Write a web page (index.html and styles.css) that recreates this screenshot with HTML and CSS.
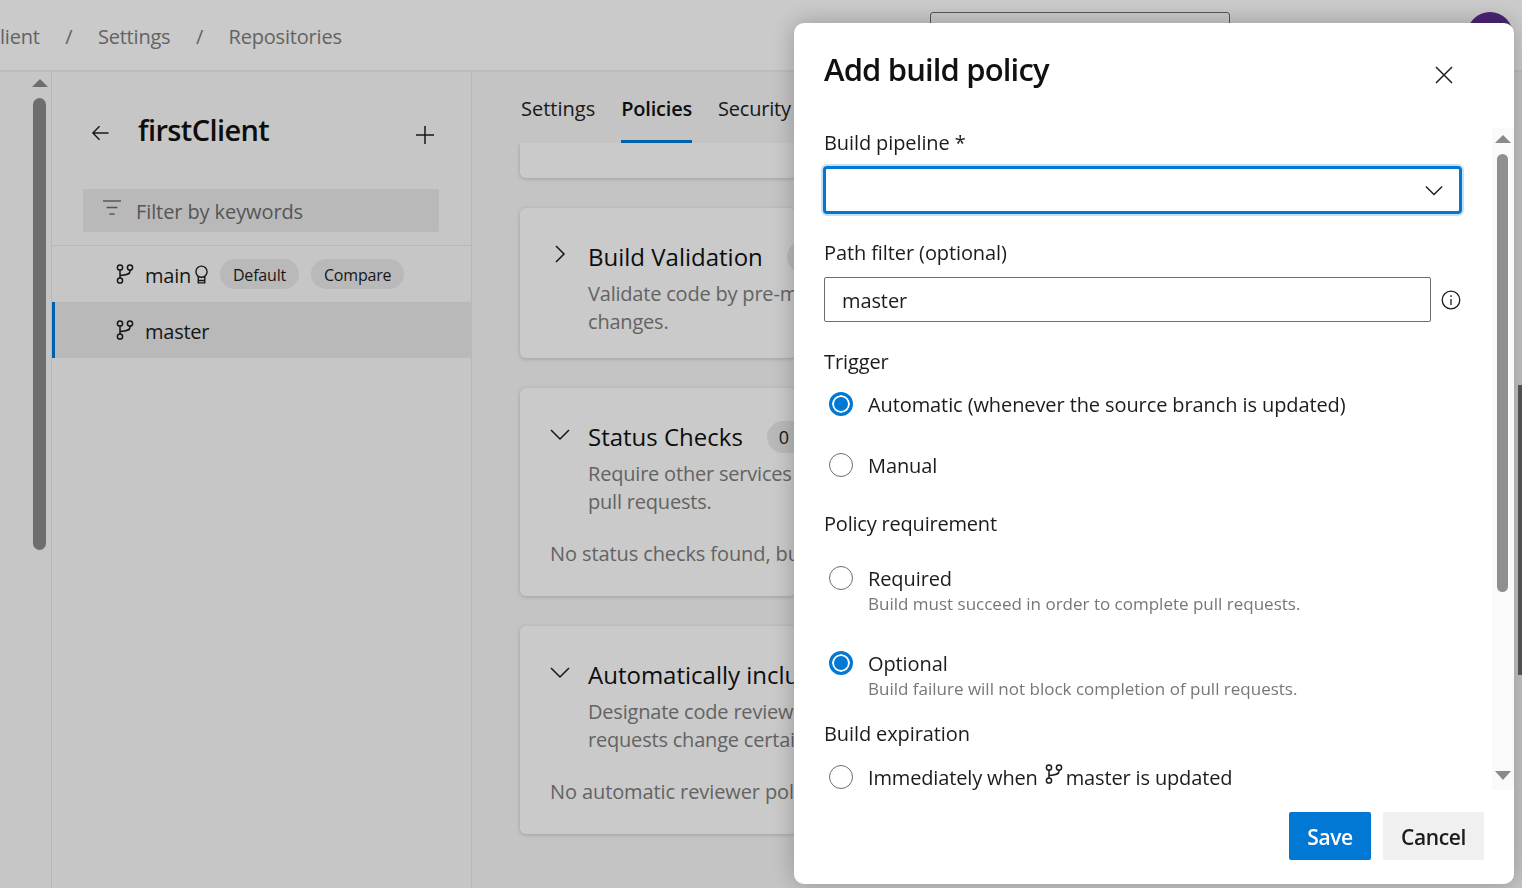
FILE: index.html
```html
<!DOCTYPE html>
<html lang="en">
<head>
    <meta charset="UTF-8">
    <title>Add build policy</title>
    <link rel="stylesheet" href="styles.css">
</head>
<body>

    <svg class="defs" width="0" height="0">
        <symbol id="branch" viewBox="0 0 18 20">
            <circle cx="4" cy="3.5" r="2.6"/>
            <circle cx="14" cy="3.5" r="2.6"/>
            <circle cx="4" cy="16.5" r="2.6"/>
            <path d="M4 6.1V13.9M14 6.1V7.5C14 10 11 10.8 4 11.5"/>
        </symbol>
    </svg>

    <div class="page">
        <header class="topbar">
            <nav class="crumbs">
                <span class="crumb-first">firstClient</span>
                <span class="crumb-sep">/</span>
                <span>Settings</span>
                <span class="crumb-sep">/</span>
                <span>Repositories</span>
            </nav>
            <div class="search"></div>
            <div class="avatar"></div>
        </header>

        <div class="content">
            <div class="rail">
                <i class="arrow-up rail-arrow"></i>
                <div class="rail-thumb"></div>
            </div>

            <aside class="sidebar">
                <div class="side-head">
                    <svg class="icon back" viewBox="0 0 20 20"><path d="M18.5 10H2M9 3l-7 7 7 7"/></svg>
                    <h2>firstClient</h2>
                    <svg class="icon plus" viewBox="0 0 18 18"><path d="M9 0V18M0 9H18"/></svg>
                </div>
                <div class="filter">
                    <svg class="icon filter-icon" viewBox="0 0 18 16"><path d="M0 1H18M3.5 7.5H14.5M6.5 14H11.5"/></svg>
                    <span>Filter by keywords</span>
                </div>
                <ul class="branches">
                    <li class="branch">
                        <svg class="icon branch-icon"><use href="#branch"/></svg>
                        <span>main</span>
                        <svg class="icon award" viewBox="0 0 14 20"><circle cx="7" cy="7" r="6"/><path d="M3.5 12V19H10.5V12M3.5 16.5H10.5"/></svg>
                        <span class="pill">Default</span>
                        <span class="pill">Compare</span>
                    </li>
                    <li class="branch selected">
                        <svg class="icon branch-icon"><use href="#branch"/></svg>
                        <span>master</span>
                    </li>
                </ul>
            </aside>

            <main class="main">
                <div class="tabs">
                    <a class="tab-first">Settings</a>
                    <a class="active">Policies</a>
                    <a class="tab-last">Security</a>
                </div>
                <div class="scroller">
                    <div class="cards">
                        <section class="card card-cut"></section>

                        <section class="card">
                            <div class="card-head">
                                <svg class="icon chev chev-right" viewBox="0 0 20 20"><path d="M6 2l8 8-8 8"/></svg>
                                <h3>Build Validation</h3>
                                <span class="count">0</span>
                            </div>
                            <p class="desc">Validate code by pre-merge<br>changes.</p>
                        </section>

                        <section class="card">
                            <div class="card-head">
                                <svg class="icon chev" viewBox="0 0 20 20"><path d="M1 6l9 9 9-9"/></svg>
                                <h3>Status Checks</h3>
                                <span class="count">0</span>
                            </div>
                            <p class="desc">Require other services<br>pull requests.</p>
                            <p class="note">No status checks found, but</p>
                        </section>

                        <section class="card">
                            <div class="card-head">
                                <svg class="icon chev" viewBox="0 0 20 20"><path d="M1 6l9 9 9-9"/></svg>
                                <h3>Automatically included</h3>
                            </div>
                            <p class="desc">Designate code reviewers<br>requests change certain</p>
                            <p class="note">No automatic reviewer policies</p>
                        </section>
                    </div>
                    <div class="page-thumb"></div>
                </div>
            </main>
        </div>
    </div>

    <div class="backdrop"></div>

    <div class="modal">
        <div class="modal-head">
            <h1>Add build policy</h1>
            <svg class="icon close" viewBox="0 0 18 18"><path d="M1 1L17 17M17 1L1 17"/></svg>
        </div>

        <div class="modal-body">
            <form class="form">
                <label class="label">Build pipeline *</label>
                <div class="dropdown">
                    <svg class="icon drop-chev" viewBox="0 0 20 12"><path d="M1 1.5l9 9 9-9"/></svg>
                </div>

                <label class="label label-path">Path filter (optional)</label>
                <div class="path-row">
                    <div class="textbox">master</div>
                    <svg class="icon info" viewBox="0 0 20 20">
                        <circle cx="10" cy="10" r="8.8"/>
                        <path d="M10 9V15M10 5.2V7"/>
                    </svg>
                </div>

                <div class="label label-trigger">Trigger</div>
                <div class="radio radio-a"><i class="dot on"></i><span>Automatic (whenever the source branch is updated)</span></div>
                <div class="radio radio-b"><i class="dot"></i><span>Manual</span></div>

                <div class="label label-policy">Policy requirement</div>
                <div class="radio radio-req"><i class="dot"></i><span>Required</span></div>
                <div class="hint">Build must succeed in order to complete pull requests.</div>
                <div class="radio radio-opt"><i class="dot on"></i><span>Optional</span></div>
                <div class="hint">Build failure will not block completion of pull requests.</div>

                <div class="label label-expire">Build expiration</div>
                <div class="radio radio-imm">
                    <i class="dot"></i>
                    <span>Immediately when</span>
                    <svg class="icon branch-inline"><use href="#branch"/></svg>
                    <span>master is updated</span>
                </div>
            </form>

            <div class="modal-scroll">
                <i class="arrow-up"></i>
                <div class="modal-thumb"></div>
                <i class="arrow-down"></i>
            </div>
        </div>

        <div class="modal-foot">
            <button class="btn btn-save" type="button">Save</button>
            <button class="btn" type="button">Cancel</button>
        </div>
    </div>

</body>
</html>
```

FILE: styles.css
```css
* {
    box-sizing: border-box;
}
html, body {
    margin: 0;
    height: 888px;
    overflow: hidden;
}
body {
    font-family: "Open Sans", "Noto Sans", Arial, sans-serif;
    font-size: 20px;
    letter-spacing: -0.1px;
    color: #1c1c1c;
    background: #f5f5f5;
}
h1, h2, h3, p, ul {
    margin: 0;
    padding: 0;
}
.defs {
    position: absolute;
}
.icon {
    display: block;
    flex: none;
    fill: none;
    stroke: #1c1c1c;
    stroke-width: 1.5;
}

.page {
    height: 888px;
    display: flex;
    flex-direction: column;
}

/* barra superior */
.topbar {
    height: 72px;
    flex: none;
    display: flex;
    background: #fdfdfd;
    border-bottom: 2px solid #ececec;
    overflow: hidden;
}
.crumbs {
    display: flex;
    align-items: center;
    height: 72px;
    width: 930px;
    letter-spacing: -0.2px;
    color: #7c7c7c;
}
.crumbs span {
    white-space: nowrap;
}
.crumb-first {
    margin-left: -48px;
}
.crumb-sep {
    margin: 0 25.5px;
}
.search {
    width: 300px;
    height: 44px;
    margin-top: 12px;
    border: 1px solid #6a6a6a;
    border-radius: 3px;
}
.avatar {
    width: 46px;
    height: 46px;
    margin: 12px 0 0 237px;
    border-radius: 50%;
    background: #5c2e91;
}

.content {
    flex: 1;
    min-height: 0;
    display: flex;
}

/* scroll izquierdo */
.rail {
    width: 52px;
    flex: none;
    padding: 7px 0 0 33px;
    background: #f8f8f8;
    border-right: 1px solid #e6e6e6;
}
.rail-arrow {
    margin-left: -1px;
}
.rail-thumb {
    width: 13px;
    height: 452px;
    margin-top: 11px;
    border-radius: 7px;
    background: #8a8a8a;
}
.arrow-up, .arrow-down {
    display: block;
    width: 0;
    height: 0;
    border-left: 8px solid transparent;
    border-right: 8px solid transparent;
}
.arrow-up {
    border-bottom: 8px solid #8a8a8a;
}
.arrow-down {
    border-top: 9px solid #8a8a8a;
}

/* panel de ramas */
.sidebar {
    width: 420px;
    flex: none;
    background: #f8f8f8;
    border-right: 1px solid #e6e6e6;
}
.side-head {
    height: 117px;
    display: flex;
    align-items: center;
    padding: 0 37px 0 39px;
}
.back {
    width: 19px;
    height: 20px;
    margin-top: 5px;
}
.side-head h2 {
    flex: 1;
    margin: -3px 0 0 28px;
    font-size: 29px;
    font-weight: 600;
    letter-spacing: -0.6px;
    color: #111;
}
.plus {
    width: 18px;
    height: 18px;
    margin-top: 9px;
}
.filter {
    height: 43px;
    margin: 0 32px 0 31px;
    padding-left: 20px;
    display: flex;
    align-items: center;
    gap: 15px;
    border-radius: 2px;
    background: #e8e8e8;
    color: #6c6c6c;
}
.filter span {
    padding-top: 2px;
}
.filter-icon {
    width: 18px;
    height: 16px;
    margin-top: -5px;
    stroke: #6c6c6c;
}
.branches {
    list-style: none;
    margin-top: 13px;
    border-top: 1px solid #e6e6e6;
}
.branch {
    height: 56px;
    display: flex;
    align-items: center;
    padding: 2px 0 0 64px;
    letter-spacing: -0.25px;
}
.branch.selected {
    background: #e8e8e8;
    border-left: 3px solid #0078d4;
    padding-left: 61px;
}
.branch-icon {
    width: 18px;
    height: 20px;
    margin: -2px 11px 0 0;
}
.award {
    width: 13px;
    height: 19px;
    margin: -2px 0 0 4px;
}
.pill {
    height: 30px;
    line-height: 32px;
    padding: 0 13px;
    margin: -2px 0 0 12px;
    border-radius: 15px;
    background: #e8e8e8;
    font-size: 16px;
    letter-spacing: -0.2px;
}

/* contenido principal */
.main {
    flex: 1;
    min-width: 0;
    display: flex;
    flex-direction: column;
}
.tabs {
    height: 71px;
    flex: none;
    display: flex;
    gap: 26px;
    padding-left: 49px;
}
.tabs a {
    height: 71px;
    padding-top: 23px;
    color: #222;
}
.tabs .tab-first {
    letter-spacing: 0;
}
.tabs .tab-last {
    letter-spacing: -0.2px;
}
.tabs .active {
    font-weight: 600;
    letter-spacing: -0.2px;
    color: #111;
    border-bottom: 3px solid #0078d4;
}
.scroller {
    flex: 1;
    min-height: 0;
    display: flex;
    overflow: hidden;
}
.cards {
    width: 276px;
    margin-left: 48px;
}
.card {
    background: #fdfdfd;
    border-radius: 6px;
    padding: 32px 0 22px 30px;
    margin-bottom: 30px;
    overflow: hidden;
    box-shadow: 0 1px 4px rgba(0, 0, 0, .18);
}
.card-cut {
    height: 35px;
    padding: 0;
    border-radius: 0 0 6px 6px;
}
.card-head {
    display: flex;
    align-items: center;
    height: 34px;
}
.chev {
    width: 20px;
    height: 20px;
    margin: -6px 18px 0 0;
}
.chev-right {
    margin-top: -7px;
}
.card-head h3 {
    margin-top: -2px;
    font-size: 24px;
    font-weight: 400;
    letter-spacing: 0;
    color: #111;
    white-space: nowrap;
}
.count {
    flex: none;
    width: 44px;
    height: 32px;
    line-height: 32px;
    padding-left: 12px;
    margin-left: 24px;
    border-radius: 16px;
    background: #e8e8e8;
    font-size: 18px;
}
.desc {
    margin: 6px 0 0 38px;
    line-height: 28px;
    letter-spacing: -0.2px;
    color: #7c7c7c;
    white-space: nowrap;
}
.note {
    margin: 24px 0 6px;
    line-height: 28px;
    color: #7c7c7c;
    white-space: nowrap;
}
.page-thumb {
    width: 4px;
    height: 290px;
    margin: 242px 0 0 auto;
    background: #6e6e6e;
}

/* capa oscura */
.backdrop {
    position: fixed;
    inset: 0;
    background: rgba(0, 0, 0, .2);
}

/* dialogo */
.modal {
    position: fixed;
    left: 794px;
    top: 23px;
    width: 720px;
    height: 861px;
    display: flex;
    flex-direction: column;
    background: #fff;
    border-radius: 10px;
    box-shadow: 0 0 24px rgba(0, 0, 0, .25);
}
.modal-head {
    height: 105px;
    flex: none;
    display: flex;
    align-items: flex-start;
    justify-content: space-between;
    padding: 25px 61px 0 30px;
}
.modal-head h1 {
    font-size: 31px;
    line-height: 42px;
    font-weight: 600;
    letter-spacing: -0.85px;
    color: #111;
}
.close {
    width: 18px;
    height: 18px;
    margin-top: 18px;
}
.modal-body {
    height: 662px;
    flex: none;
    display: flex;
}
.form {
    width: 698px;
    flex: none;
    padding: 1px 30px 0;
    overflow: hidden;
}
.label {
    display: block;
    height: 28px;
    line-height: 28px;
    white-space: nowrap;
}
.dropdown {
    height: 48px;
    margin: 9px 0 0 -1px;
    padding-right: 16px;
    display: flex;
    align-items: center;
    justify-content: flex-end;
    border: 3px solid #0078d4;
    border-radius: 4px;
    box-shadow: 0 0 0 2px #c7e0f4;
}
.drop-chev {
    width: 18px;
    height: 11px;
}
.label-path {
    margin-top: 25px;
}
.path-row {
    display: flex;
    align-items: center;
    margin-top: 10px;
}
.textbox {
    width: 607px;
    height: 45px;
    line-height: 45px;
    padding-left: 17px;
    border: 1px solid #6e6e6e;
    border-radius: 2px;
}
.info {
    width: 20px;
    height: 20px;
    margin: 0 0 0 10px;
    stroke-width: 1.3;
}
.label-trigger {
    margin-top: 26px;
}
.radio {
    height: 28px;
    display: flex;
    align-items: center;
    padding-left: 5px;
    white-space: nowrap;
}
.dot {
    width: 24px;
    height: 24px;
    flex: none;
    margin-right: 15px;
    border: 1px solid #6e6e6e;
    border-radius: 50%;
}
.dot.on {
    border: 3px solid #0078d4;
    background: #0078d4;
    box-shadow: inset 0 0 0 2px #fff;
}
.radio-a {
    margin-top: 14px;
}
.radio-b {
    margin-top: 33px;
}
.label-policy {
    margin-top: 31px;
    letter-spacing: -0.2px;
}
.radio-req {
    margin-top: 26px;
}
.hint {
    height: 24px;
    line-height: 24px;
    padding-left: 44px;
    font-size: 17px;
    letter-spacing: 0;
    color: #777;
    white-space: nowrap;
}
.radio-opt {
    margin-top: 33px;
}
.label-expire {
    margin-top: 19px;
}
.radio-imm {
    margin-top: 15px;
    letter-spacing: -0.15px;
}
.branch-inline {
    width: 18px;
    height: 20px;
    margin: -6px 3px 0 7px;
}
.modal-scroll {
    flex: 1;
    display: flex;
    flex-direction: column;
    padding: 7px 0 10px 3px;
    background: #fafafa;
}
.modal-thumb {
    width: 11px;
    height: 438px;
    margin: 11px 0 auto 2px;
    border-radius: 6px;
    background: #8f8f8f;
}
.modal-foot {
    flex: 1;
    display: flex;
    justify-content: flex-end;
    gap: 12px;
    padding: 22px 30px 0 0;
}
.btn {
    width: 101px;
    height: 48px;
    padding-top: 3px;
    border: none;
    border-radius: 2px;
    background: #f0f0f0;
    font: 600 21px "Open Sans", "Noto Sans", Arial, sans-serif;
    letter-spacing: -0.4px;
    color: #1c1c1c;
}
.btn-save {
    width: 82px;
    background: #0078d4;
    color: #fff;
}
```
